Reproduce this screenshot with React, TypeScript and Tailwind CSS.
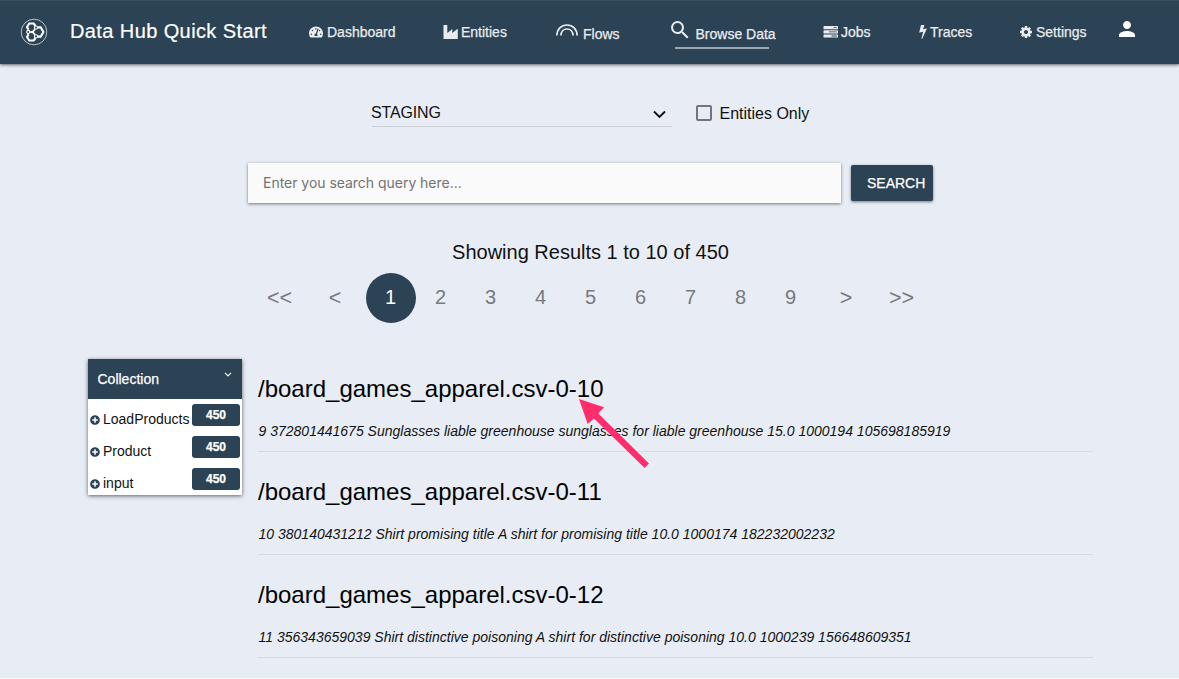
import type { ReactNode } from "react";
import { FaPlusCircle, FaTachometerAlt } from "react-icons/fa";
import { MdPerson, MdSearch } from "react-icons/md";

function Logo() {
  return (
    <svg width="28" height="28" viewBox="0 0 28 28" fill="none" stroke="#fff">
      <circle cx="14" cy="14" r="12.8" strokeWidth="0.9" opacity="0.75" />
      <path
        d="M8.600 11.600 7 9l2.300-3.500h4.400L15.600 8m2.400 1.400h2.800l2.600 4.600-2.600 4.600h-2.800M15.600 20l-1.900 2.500H9.300L7 19l1.600-2.600"
        strokeWidth="2.100"
      />
      <path d="M9 14h4l2.500-4M13 14l2.500 4" strokeWidth="1.500" />
      <circle cx="12.300" cy="14" r="1.300" fill="#fff" stroke="none" />
      <g fill="#2c4255" strokeWidth="1.100">
        <circle cx="8.300" cy="14" r="1.600" />
        <circle cx="16" cy="9.600" r="1.600" />
        <circle cx="16" cy="18.400" r="1.600" />
      </g>
    </svg>
  );
}

function IndustryIcon() {
  return (
    <svg width="15" height="14" viewBox="0 0 15 14" fill="currentColor">
      <path d="M.5 0h3.800v8l5-4v4l5-4h.5V14H.5z" />
    </svg>
  );
}

function FlowsIcon() {
  return (
    <svg width="22" height="12" viewBox="0 0 22 12" fill="none" stroke="currentColor" strokeWidth="1.700">
      <path d="M.9 11.500C.9 5 5.300 1 11 1s10.100 4 10.100 10.500M5 11.500C5 7.500 7.500 5 11 5s6 2.500 6 6.500" />
    </svg>
  );
}

function ServerIcon() {
  return (
    <svg width="15" height="12" viewBox="0 0 15 12" fill="currentColor">
      <rect x=".5" width="14.500" height="3.200" rx=".5" />
      <rect x=".5" y="4.200" width="14.500" height="3.200" rx=".5" />
      <rect x=".5" y="8.400" width="14.500" height="3.200" rx=".5" />
      <path fill="#2c4255" d="M10.500 1.200h3.200v.9h-3.200zM6 5.400h7.700v.9H6zM8.500 9.600h5.200v.9H8.500z" />
    </svg>
  );
}

function BoltIcon() {
  return (
    <svg width="8" height="14" viewBox="0 128 896 1664" fill="currentColor">
      <path d="M885 566q18 20 7 44l-540 1157q-13 25-42 25-4 0-14-2-17-5-25.500-19t-4.500-30l197-808-406 101q-4 1-12 1-18 0-31-11-18-15-13-39l201-825q4-16 17-26t28.500-10h328q19 0 32 12.500t13 29.500q0 8-5 18l-171 463 396-98q8-2 12-2 19 0 34 15z" />
    </svg>
  );
}

function CogIcon() {
  return (
    <svg width="12" height="12" viewBox="0 128 1536 1536" fill="currentColor">
      <path d="M1024 896q0-106-75-181t-181-75-181 75-75 181 75 181 181 75 181-75 75-181zm512-109v222q0 12-8 23t-20 13l-185 28q-19 54-39 91 35 50 107 138 10 12 10 25t-9 23q-27 37-99 108t-94 71q-12 0-26-9l-138-108q-44 23-91 38-16 136-29 186-7 28-36 28h-222q-14 0-24.500-8.500t-11.500-21.500l-28-184q-49-16-90-37l-141 107q-10 9-25 9-14 0-25-11-126-114-165-168-7-10-7-23 0-12 8-23 15-21 51-66.500t54-70.500q-27-50-41-99l-183-27q-13-2-21-12.500t-8-23.500v-222q0-12 8-23t19-13l186-28q14-46 39-92-40-57-107-138-10-12-10-24 0-10 9-23 26-36 98.500-107.500t94.500-71.500q13 0 26 10l138 107q44-23 91-38 16-136 29-186 7-28 36-28h222q14 0 24.500 8.500t11.500 21.500l28 184q49 16 90 37l142-107q9-9 24-9 13 0 25 10 129 119 165 170 7 8 7 22 0 12-8 23-15 21-51 66.500t-54 70.500q26 50 41 98l183 28q13 2 21 12.500t8 23.500z" />
    </svg>
  );
}

function NavItem({ icon, label, className }: { icon: ReactNode; label: string; className: string }) {
  return (
    <a className={`flex h-5 shrink-0 items-center text-sm leading-5 text-[#e9ecee] ${className}`}>
      {icon}
      <span className="[-webkit-text-stroke:0.25px_#e9ecee]">{label}</span>
    </a>
  );
}

function Header() {
  return (
    <header className="relative flex h-16 shrink-0 items-start border-t border-[#395060] bg-[#2c4255] pl-5 pt-[21px] shadow-[0_1px_3px_rgba(0,0,0,0.6)]">
      <div className="-mt-1 w-[50px] shrink-0">
        <Logo />
      </div>
      <h1 className="-mt-[3px] w-[239px] shrink-0 text-xl leading-6 tracking-[0.02em] text-white [-webkit-text-stroke:0.2px_white]">
        Data Hub Quick Start
      </h1>
      <NavItem className="w-[134px] gap-[3px]" label="Dashboard" icon={<FaTachometerAlt size={14} className="mr-px" />} />
      <NavItem className="w-[113px] gap-[3px]" label="Entities" icon={<IndustryIcon />} />
      <NavItem
        className="mt-0.5 w-[115px] gap-[5px]"
        label="Flows"
        icon={<span className="-mt-[9px]"><FlowsIcon /></span>}
      />
      <div className="-mt-0.5 w-[152px] shrink-0">
        <NavItem
          className="mt-1"
          label="Browse Data"
          icon={<MdSearch size={24} className="-ml-[3px] -mt-2 mr-[3.500px] shrink-0" />}
        />
        <div className="ml-1 mt-[3px] h-0.5 w-[94px] bg-[#9aa7b3]" />
      </div>
      <NavItem className="w-24 gap-[3px]" label="Jobs" icon={<ServerIcon />} />
      <NavItem className="w-[101px] gap-[3px]" label="Traces" icon={<BoltIcon />} />
      <NavItem className="w-[95px] gap-1" label="Settings" icon={<CogIcon />} />
      <MdPerson size={24} className="-mt-[5px] shrink-0 text-white" />
    </header>
  );
}

function Filters() {
  return (
    <div className="ml-[372px] mt-[35px] flex h-7 shrink-0">
      <div className="flex h-7 w-[300px] items-start justify-between border-b border-[#c9ced5] text-base leading-7">
        <span className="-ml-px tracking-[-0.01em]">STAGING</span>
        <svg className="mr-[6px] mt-[11px]" width="13" height="9" viewBox="0 0 13 9" fill="none" stroke="#111" strokeWidth="1.900">
          <path d="m1 1.500 5.500 5.400L12 1.500" />
        </svg>
      </div>
      <label className="ml-6 flex h-7 items-center gap-[7.500px] text-base">
        <span className="size-4 rounded-[2px] border-2 border-[#757575]" />
        <span className="mt-0.5">Entities Only</span>
      </label>
    </div>
  );
}

function SearchBar() {
  return (
    <div className="ml-[248px] mt-9 flex h-10 shrink-0 items-center gap-2.5">
      <div className="flex h-10 w-[593px] items-center bg-[#fafafa] pl-[15px] font-[Inter,sans-serif] text-sm tracking-[-0.03px] text-[#737373] shadow-[0_1px_3px_rgba(0,0,0,0.5)]">
        Enter you search query here...
      </div>
      <button className="h-9 w-[82px] rounded-[2px] bg-[#2c4255] pl-4 text-left text-sm text-white shadow-[0_1px_3px_rgba(0,0,0,0.5)] [-webkit-text-stroke:0.25px_white]">
        SEARCH
      </button>
    </div>
  );
}

const pages = ["1", "2", "3", "4", "5", "6", "7", "8", "9"];

function Pagination() {
  return (
    <nav className="ml-[254px] mt-[6px] flex h-[50px] shrink-0 items-center text-center text-xl text-[#77797c]">
      <span className="w-[51px] text-[21.500px]">&lt;&lt;</span>
      <span className="ml-[5px] w-[50px] text-[21.500px]">&lt;</span>
      <div className="ml-[6px] flex">
        {pages.map((page) => (
          <span
            key={page}
            className={`size-[50px] rounded-full pr-px leading-[49px] ${page === "1" ? "bg-[#2c4255] text-white" : ""}`}
          >
            {page}
          </span>
        ))}
      </div>
      <span className="ml-[5px] w-[50px] text-[21.500px]">&gt;</span>
      <span className="ml-[5px] w-[51px] text-[21.500px]">&gt;&gt;</span>
    </nav>
  );
}

function CollectionPanel() {
  return (
    <aside className="mt-[10px] h-[136px] w-[154px] shrink-0 bg-white text-sm shadow-[0_1px_4px_rgba(0,0,0,0.6)]">
      <div className="flex h-10 items-center justify-between bg-[#2c4255] pl-[9.500px] pr-2.5 text-white">
        <span className="[-webkit-text-stroke:0.25px_white]">Collection</span>
        <svg className="-mt-[9px]" width="8" height="5" viewBox="0 0 8 5" fill="none" stroke="#fff" strokeWidth="1.200">
          <path d="m1 .8 3 3 3-3" />
        </svg>
      </div>
      {["LoadProducts", "Product", "input"].map((name) => (
        <div key={name} className="flex h-8 items-start pl-[1.500px] pt-[5px]">
          <FaPlusCircle size={10} className="mt-[11px] shrink-0 text-[#2c4255]" />
          <span className="ml-[3.500px] mt-[5px] w-[89px] shrink-0 leading-5">{name}</span>
          <span className="h-[22px] w-12 shrink-0 rounded-[3px] bg-[#2c4255] text-center text-xs font-bold leading-[22px] text-white [-webkit-text-stroke:0.25px_white]">
            450
          </span>
        </div>
      ))}
    </aside>
  );
}

const results = [
  {
    uri: "/board_games_apparel.csv-0-10",
    text: "9 372801441675 Sunglasses liable greenhouse sunglasses for liable greenhouse 15.0 1000194 105698185919",
  },
  {
    uri: "/board_games_apparel.csv-0-11",
    text: "10 380140431212 Shirt promising title A shirt for promising title 10.0 1000174 182232002232",
  },
  {
    uri: "/board_games_apparel.csv-0-12",
    text: "11 356343659039 Shirt distinctive poisoning A shirt for distinctive poisoning 10.0 1000239 156648609351",
  },
];

function Pointer() {
  return (
    <svg className="absolute left-[579px] top-[399px]" width="72" height="70" viewBox="0 0 72 70">
      <path fill="#ff2d6c" d="m0 0 25 8.300-5.700 6.200L70 64.500 65.700 69 15 19.500 8.700 25z" />
    </svg>
  );
}

export default function App() {
  return (
    <div className="relative flex h-[679px] w-[1179px] flex-col overflow-hidden whitespace-nowrap border-b border-[#f6f7f9] bg-[#e8edf5] font-['Liberation_Sans',Arial,sans-serif] text-[#111]">
      <Header />
      <Filters />
      <SearchBar />
      <h2 className="mt-[35px] shrink-0 pl-[2px] text-center text-xl leading-[29px]">
        Showing Results 1 to 10 of 450
      </h2>
      <Pagination />
      <main className="ml-[88px] mt-[26px] flex items-start">
        <CollectionPanel />
        <div className="ml-4 w-[835px]">
          {results.map((result) => (
            <article key={result.uri} className="h-[103px] border-b border-[#d7dbe1] pt-[26px]">
              <h3 className="text-2xl leading-7 text-black">{result.uri}</h3>
              <p className="ml-[0.500px] mt-[18px] text-sm italic leading-5 tracking-[0.006px]">{result.text}</p>
            </article>
          ))}
        </div>
      </main>
      <Pointer />
    </div>
  );
}
